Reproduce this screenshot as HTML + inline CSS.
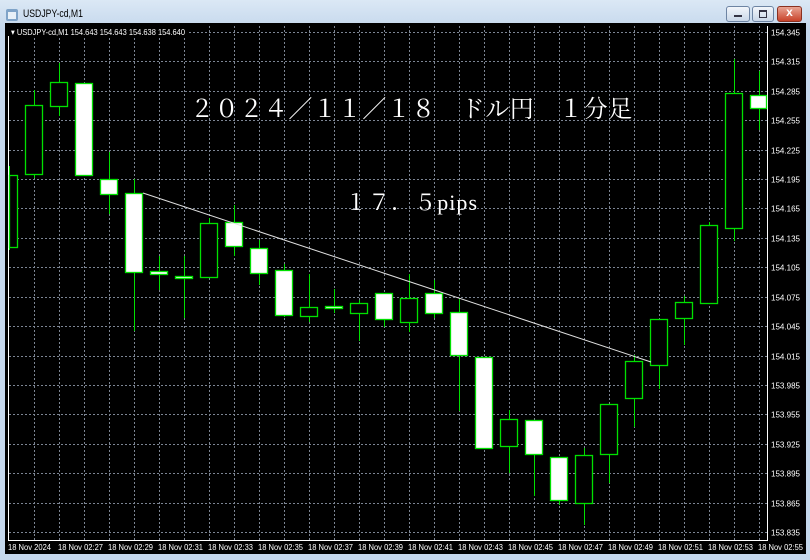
<!DOCTYPE html>
<html><head><meta charset="utf-8"><style>
html,body{margin:0;padding:0;width:810px;height:560px;overflow:hidden;background:#c9dcef;}
.win{position:absolute;left:0;top:0;width:810px;height:560px;background:linear-gradient(#dbe8f5,#c4d7ec 30px,#c4d7ec);}
.btn{position:absolute;top:6px;height:14px;border:1px solid #6d84a3;border-radius:3px;background:linear-gradient(#f2f6fb,#c9d7e8);}
svg{position:absolute;left:0;top:0;}
</style></head><body>
<div class="win">
<div class="btn" style="left:726px;width:22px"><div style="position:absolute;left:7px;top:8px;width:8px;height:2px;background:#334"></div></div>
<div class="btn" style="left:752px;width:20px"><div style="position:absolute;left:6px;top:3px;width:6px;height:5px;border:1px solid #334;border-top-width:2px"></div></div>
<div class="btn" style="left:777px;width:23px;background:linear-gradient(#e9a494,#c8422a);border-color:#8a3020"><div style="position:absolute;left:0;top:-2px;width:23px;text-align:center;color:#fff;font:bold 12px 'Liberation Sans',sans-serif">x</div></div>
</div>
<svg width="810" height="560" xmlns="http://www.w3.org/2000/svg" font-family="Liberation Sans, sans-serif">
<rect x="6" y="9" width="12" height="12" fill="#7fa3c8" rx="2"/><rect x="8" y="12" width="8" height="7" fill="#e8f0f8"/>
<text x="23" y="17" fill="#000" font-size="11" textLength="60" lengthAdjust="spacingAndGlyphs">USDJPY-cd,M1</text>
<rect x="5" y="23" width="801" height="531" fill="#000"/>
<g id="grid" stroke="#7c8593" stroke-width="1" stroke-dasharray="2,2"></g>
<line x1="767.5" y1="26" x2="767.5" y2="541" stroke="#fff"/>
<line x1="8" y1="540.5" x2="768" y2="540.5" stroke="#fff"/>
<line x1="8.5" y1="26" x2="8.5" y2="541" stroke="#fff"/>
<g id="candles"></g>
<line x1="143" y1="193" x2="651" y2="362" stroke="#e0e0e0" stroke-width="1"/>
<text x="190" y="117" fill="#fff" font-family="Liberation Serif, Noto Serif CJK SC, serif" font-size="24" letter-spacing="0.6">２０２４／１１／１８　ドル円　１分足</text>
<text x="345" y="210" fill="#fff" font-family="Liberation Serif, Noto Serif CJK SC, serif" font-size="22" textLength="132" lengthAdjust="spacing">１７．５pips</text>
<rect x="8" y="26" width="180" height="10" fill="#000"/>
<text x="11" y="35" fill="#fff" font-size="8.5" textLength="174" lengthAdjust="spacingAndGlyphs">▾ USDJPY-cd,M1  154.643 154.643 154.638 154.640</text>
<g id="labels" fill="#fff" font-size="8.5"></g>
</svg>
<script>
var g=document.getElementById('grid'),L=document.getElementById('labels'),C=document.getElementById('candles'),ns='http://www.w3.org/2000/svg';
function el(p,t,a,txt){var e=document.createElementNS(ns,t);for(var k in a)e.setAttribute(k,a[k]);if(txt)e.textContent=txt;p.appendChild(e);}
for(var i=0;i<18;i++){var y=Math.round(32+i*29.41)+0.5;el(g,'line',{x1:9,y1:y,x2:767,y2:y});el(L,'text',{x:771,y:y+3,textLength:29,lengthAdjust:'spacingAndGlyphs'},(154.345-i*0.03).toFixed(3));}
for(var x=34;x<767;x+=25){el(g,'line',{x1:x+0.5,y1:26,x2:x+0.5,y2:540});}
var t=['2024','02:27','02:29','02:31','02:33','02:35','02:37','02:39','02:41','02:43','02:45','02:47','02:49','02:51','02:53','02:55'];
for(var j=0;j<16;j++)el(L,'text',{x:8+j*50,y:550,textLength:(j==0?43:45),lengthAdjust:'spacingAndGlyphs'},'18 Nov '+t[j]);
var d=[[9,175,247,166,250,0],[34,105,174,90,178,0],[59,82,106,63,116,0],[84,83,175,83,175,1],[109,179,194,152,214,1],[134,193,272,179,331,1],[159,271,274,256,290,1],[184,276,278,256,318,1],[209,223,277,218,277,0],[234,222,246,205,256,1],[259,248,273,240,285,1],[284,270,315,264,317,1],[309,307,316,274,322,0],[334,306,308,289,313,1],[359,303,313,300,341,0],[384,293,319,293,327,1],[409,298,322,274,332,0],[434,293,313,280,318,1],[459,312,355,299,411,1],[484,357,448,357,448,1],[509,419,446,410,473,0],[534,420,454,420,496,1],[559,457,500,457,505,1],[584,455,503,448,525,0],[609,404,454,404,483,0],[634,361,398,355,427,0],[659,319,365,319,389,0],[684,302,318,296,345,0],[709,225,303,222,303,0],[734,93,228,59,241,0],[759,95,108,71,130,1]];
d.forEach(function(c){var x=c[0];el(C,'line',{x1:x+0.5,y1:c[3],x2:x+0.5,y2:c[4],stroke:'#00e000'});
var l=Math.max(x-9,9),r=Math.min(x+9,767);el(C,'rect',{x:l+0.5,y:c[1]+0.5,width:r-l-1,height:Math.max(c[2]-c[1],1),fill:c[5]?'#fff':'#000',stroke:'#00e000','stroke-width':1.3});});
</script>
</body></html>
